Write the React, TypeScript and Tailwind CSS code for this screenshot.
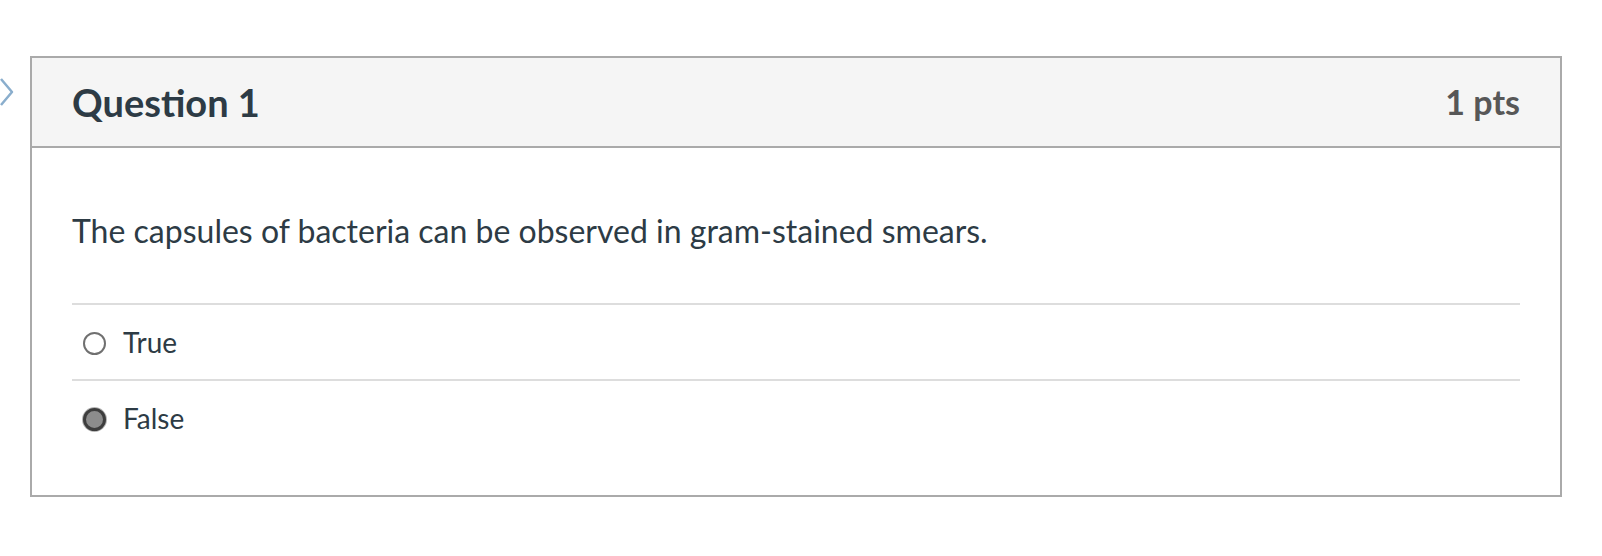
import React from "react";

type Answer = { label: string; checked: boolean };

const answers: Answer[] = [
  { label: "True", checked: false },
  { label: "False", checked: true },
];

const Radio: React.FC<{ checked: boolean }> = ({ checked }) =>
  checked ? (
    <span className="block w-[23px] h-[23px] rounded-full border-[3px] border-[#3d3d3d] bg-[#8c8c8c] shadow-[0_0_0_1px_#b5b5b5]" />
  ) : (
    <span className="block w-[23px] h-[23px] rounded-full border-2 border-[#707070] bg-white" />
  );

const App: React.FC = () => {
  return (
    <div className="relative w-[1602px] h-[556px] bg-white font-['Lato','Liberation_Sans',sans-serif] text-[#2d3b45]">
      {/* collapse arrow, half cut off on the left */}
      <svg
        className="absolute left-0 top-[78px]"
        width="14"
        height="28"
        viewBox="0 0 14 28"
        fill="none"
      >
        <polyline
          points="1,1 12,14 1,27"
          stroke="#8aaecd"
          strokeWidth="2.5"
          strokeLinejoin="round"
        />
      </svg>

      <div className="pt-[56px] pl-[30px]">
        <div className="w-[1532px] border-2 border-[#aaaaaa]">
          <div className="flex items-center justify-between h-[90px] px-10 bg-[#f5f5f5] border-b-2 border-[#aaaaaa]">
            <h2 className="text-[38px] leading-[48px] font-bold">Question 1</h2>
            <span className="text-[34px] leading-[48px] font-bold text-[#575757]">
              1 pts
            </span>
          </div>

          <div className="px-10 pt-[61px] pb-10">
            <p className="text-[32px] leading-[44px] mb-[50px]">
              The capsules of bacteria can be observed in gram-stained smears.
            </p>
            {answers.map((a) => (
              <div
                key={a.label}
                className="flex items-center h-[76px] border-t-2 border-[#dddddd] pl-[11px] gap-[17px]"
              >
                <span className="mt-[3px]">
                  <Radio checked={a.checked} />
                </span>
                <span className="text-[28px] leading-[40px]">{a.label}</span>
              </div>
            ))}
          </div>
        </div>
      </div>
    </div>
  );
};

export default App;
